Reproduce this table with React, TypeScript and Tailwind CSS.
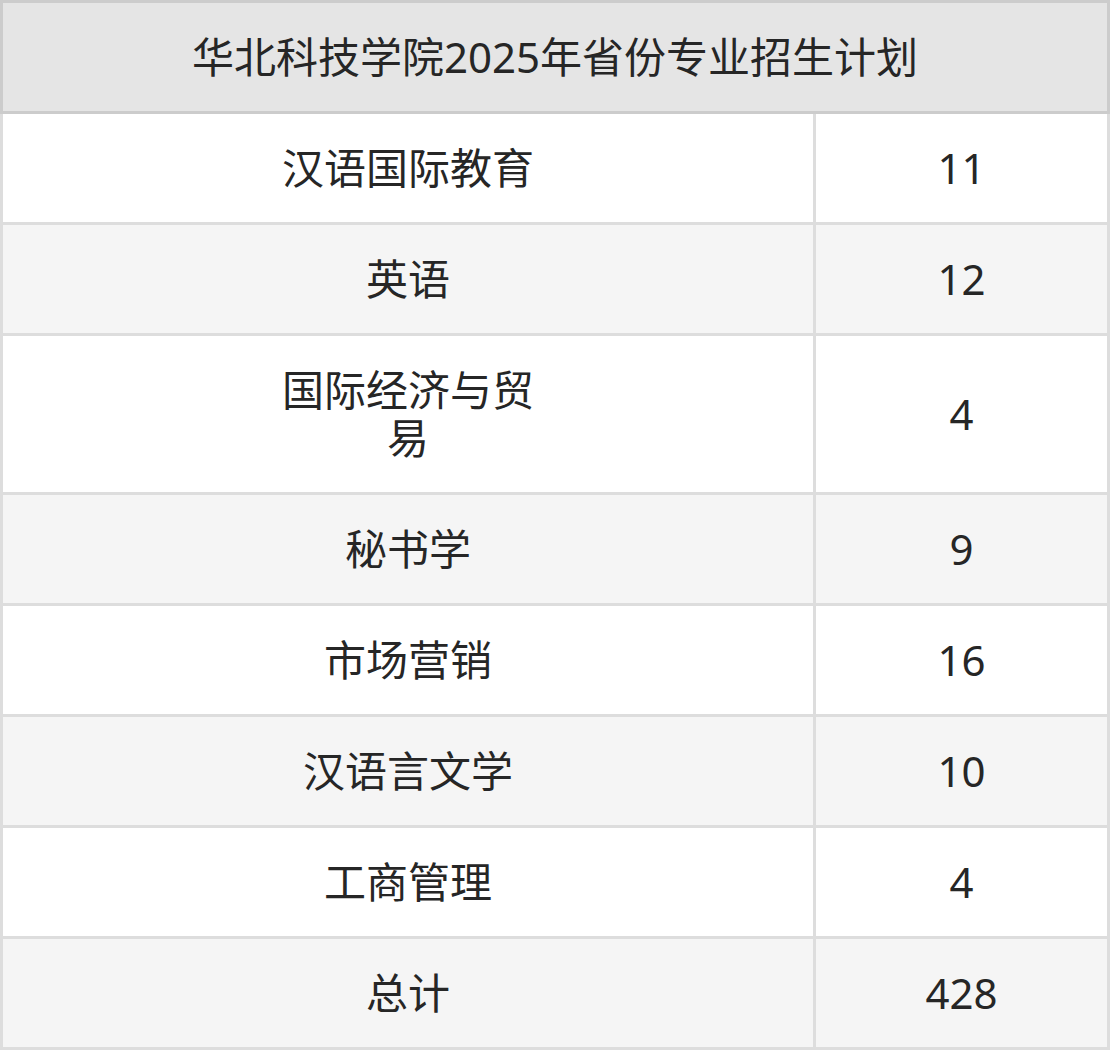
import React from 'react';

type Row = { name: React.ReactNode; count: string; tall?: boolean };

const rows: Row[] = [
  { name: '汉语国际教育', count: '11' },
  { name: '英语', count: '12' },
  { name: <>国际经济与贸<br />易</>, count: '4', tall: true },
  { name: '秘书学', count: '9' },
  { name: '市场营销', count: '16' },
  { name: '汉语言文学', count: '10' },
  { name: '工商管理', count: '4' },
  { name: '总计', count: '428' },
];

const App: React.FC = () => {
  return (
    <div className="w-[1110px] bg-white text-[#262626] text-[42px] leading-[48px] font-['Noto_Sans','Noto_Sans_CJK_SC',sans-serif]">
      {/* Title */}
      <div className="h-[114px] border-[3px] border-[#cccccc] bg-[#e5e5e5] flex items-center justify-center">
        华北科技学院2025年省份专业招生计划
      </div>

      {/* Body */}
      {rows.map((r, i) => (
        <div
          key={i}
          className={`grid grid-cols-[810px_3px_291px] border-x-[3px] border-b-[3px] border-[#dddddd] ${
            r.tall ? 'h-[159px]' : 'h-[111px]'
          } ${i % 2 === 1 ? 'bg-[#f5f5f5]' : 'bg-white'}`}
        >
          <div className="flex items-center justify-center text-center">{r.name}</div>
          <div className="bg-[#dddddd]" />
          <div className="flex items-center justify-center">{r.count}</div>
        </div>
      ))}
    </div>
  );
};

export default App;
